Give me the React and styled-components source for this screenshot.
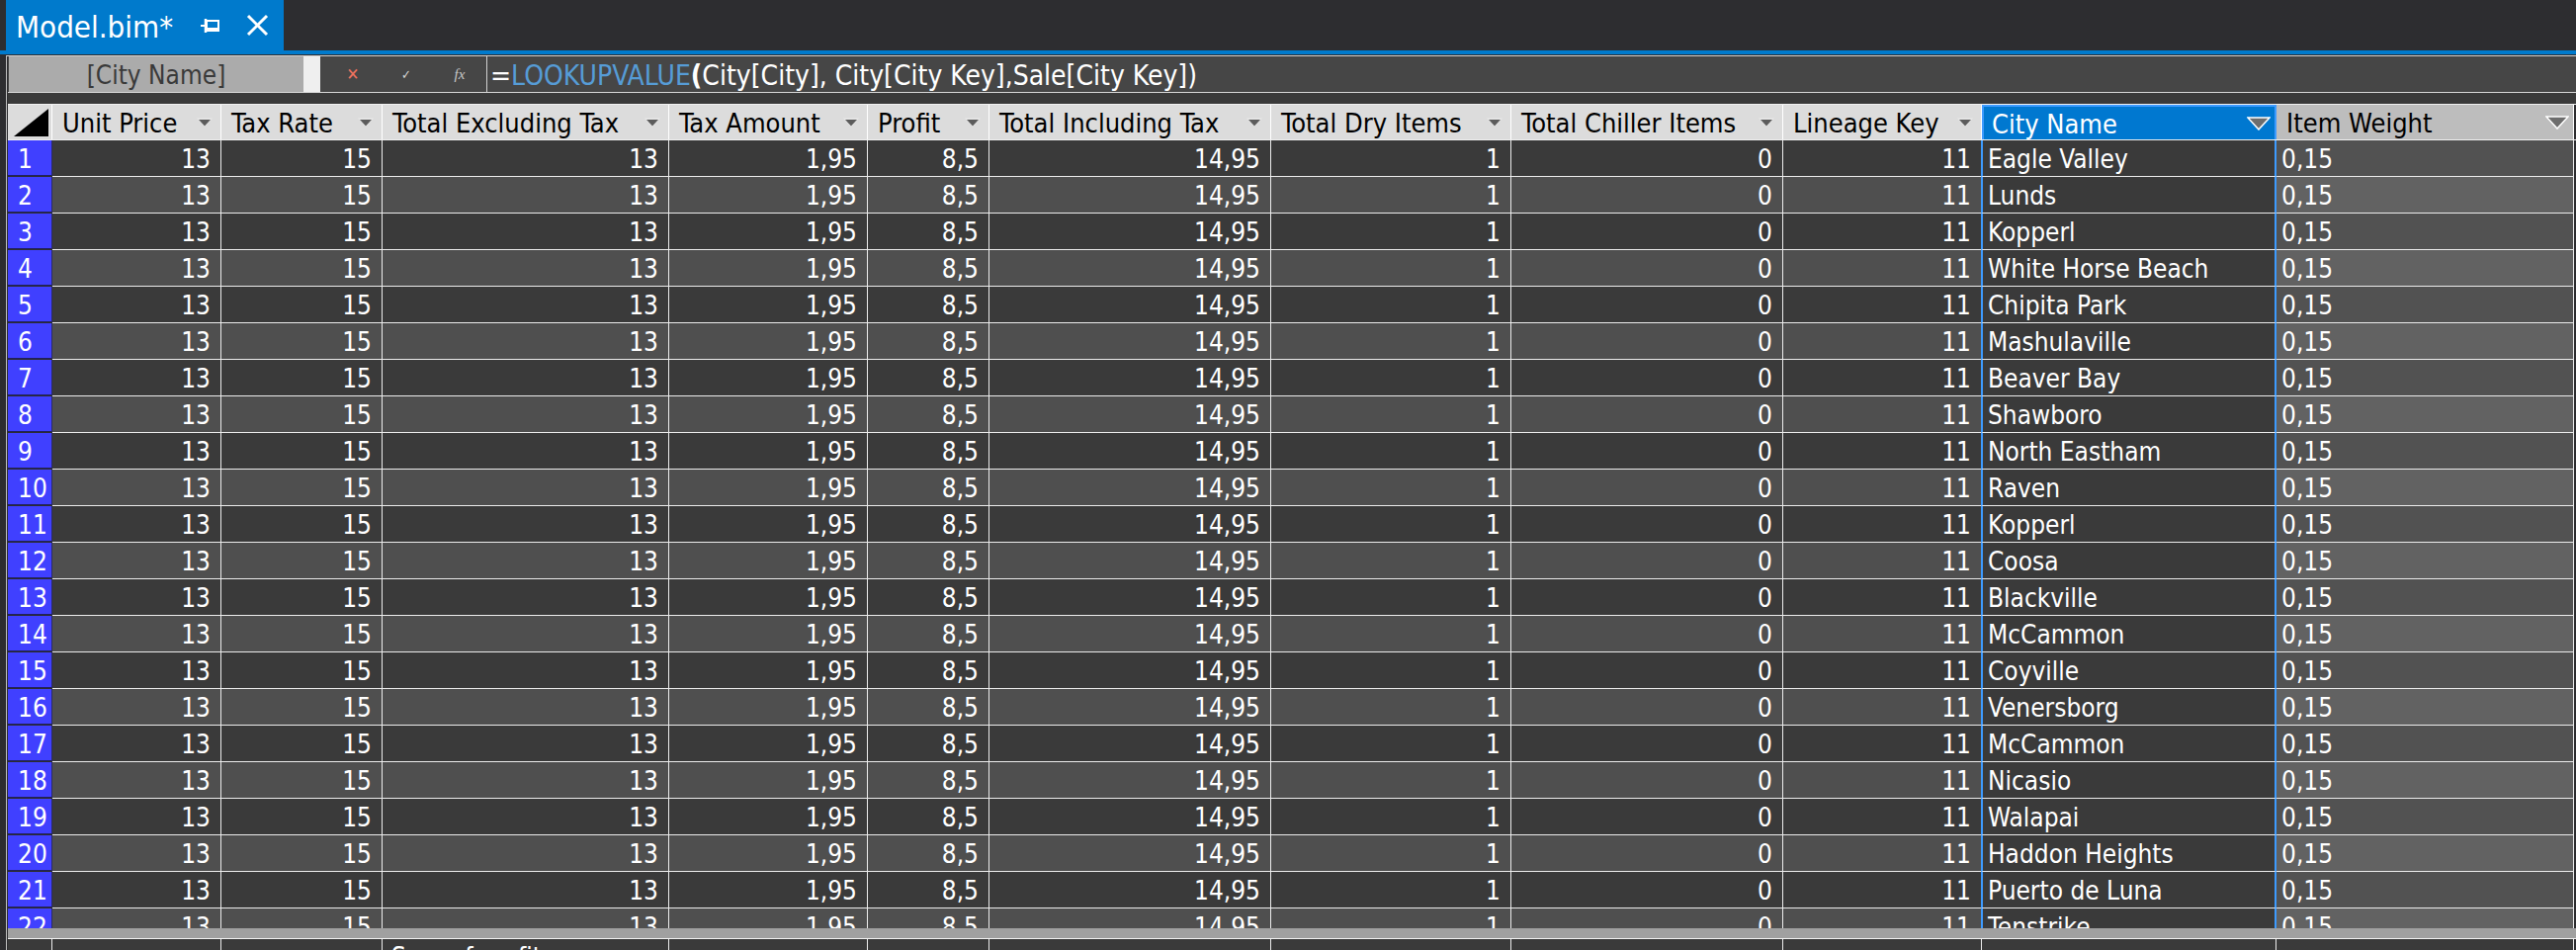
import React from 'react';
import styled, { createGlobalStyle } from 'styled-components';

// widths of grid columns, px (row header first)
const COLS = [45, 171, 163, 290, 201, 123, 285, 243, 275, 201, 298, 301];
const GRID = COLS.map((w) => `${w}px`).join(' ');

const HEADERS = [
  'Unit Price',
  'Tax Rate',
  'Total Excluding Tax',
  'Tax Amount',
  'Profit',
  'Total Including Tax',
  'Total Dry Items',
  'Total Chiller Items',
  'Lineage Key',
  'City Name',
  'Item Weight',
];

const CITIES = [
  'Eagle Valley',
  'Lunds',
  'Kopperl',
  'White Horse Beach',
  'Chipita Park',
  'Mashulaville',
  'Beaver Bay',
  'Shawboro',
  'North Eastham',
  'Raven',
  'Kopperl',
  'Coosa',
  'Blackville',
  'McCammon',
  'Coyville',
  'Venersborg',
  'McCammon',
  'Nicasio',
  'Walapai',
  'Haddon Heights',
  'Puerto de Luna',
  'Tenstrike',
];

const NUMBERS = ['13', '15', '13', '1,95', '8,5', '14,95', '1', '0', '11'];

const GlobalStyle = createGlobalStyle`
  html, body {
    margin: 0;
    padding: 0;
    background: #2d2d30;
    overflow: hidden;
  }
  body {
    font-family: "DejaVu Sans Condensed", "Liberation Sans", Arial, sans-serif;
  }
`;

const Window = styled.div`
  width: 2606px;
  height: 961px;
  display: flex;
  flex-direction: column;
  background: #2d2d30;
  overflow: hidden;
`;

// Вкладка документа
const TabStrip = styled.div`
  height: 51px;
  flex-shrink: 0;
  display: flex;
  padding-left: 6px;
`;

const Tab = styled.div`
  width: 281px;
  box-sizing: border-box;
  background: #007acc;
  display: flex;
  align-items: center;
  padding-left: 10px;
  color: #ffffff;
  font-size: 31px;
`;

const TabTitle = styled.span`
  margin-top: 2px;
`;

const TabIcon = styled.svg`
  display: block;
  margin-left: ${(p) => p.$gap}px;
`;

const BlueLine = styled.div`
  height: 4px;
  flex-shrink: 0;
  background: #007acc;
`;

const Body = styled.div`
  flex: 1;
  margin-top: 1px;
  margin-left: 6px;
  border-top: 1px solid #d2d2d2;
  border-left: 1px solid #bdbdbd;
  padding-left: 1px;
  display: flex;
  flex-direction: column;
`;

// Строка формулы
const FormulaBar = styled.div`
  height: 36px;
  flex-shrink: 0;
  display: flex;
  background: #464646;
  border-bottom: 1px solid #d6d6d6;
`;

const NameBox = styled.div`
  width: 298px;
  margin-left: 1px;
  background: #ababab;
  color: #3a3a3a;
  font-size: 26px;
  padding-top: 1px;
  box-sizing: border-box;
  display: flex;
  align-items: center;
  justify-content: center;
`;

const NameGap = styled.div`
  width: 17px;
  background: #efefef;
`;

const FormulaButtons = styled.div`
  width: 169px;
  box-sizing: border-box;
  display: flex;
  align-items: center;
  padding-left: 6px;
  border-right: 1px solid #d0d0d0;
`;

const FormulaButton = styled.span`
  width: 58px;
  text-align: center;
  color: ${(p) => p.$color};
  font-size: ${(p) => p.$size}px;
  font-family: ${(p) => (p.$serif ? '"Liberation Serif", serif' : 'inherit')};
  font-style: ${(p) => (p.$serif ? 'italic' : 'normal')};
`;

const FormulaText = styled.div`
  flex: 1;
  display: flex;
  align-items: center;
  padding: 2px 0 0 3px;
  font-size: 28px;
  color: #ffffff;
  white-space: pre;
`;

const Func = styled.span`
  color: #569cd6;
`;

const Paren = styled.span`
  font-weight: bold;
`;

const Spacer = styled.div`
  height: 11px;
  flex-shrink: 0;
  background: #3a3a3a;
`;

// Таблица
const HeaderRow = styled.div`
  display: grid;
  grid-template-columns: ${GRID};
  flex-shrink: 0;
  border-top: 1px solid #f0f0f0;
  border-bottom: 1px solid #f0f0f0;
`;

const Corner = styled.div`
  height: 35px;
  background: #dcdcdc;
  display: flex;
  align-items: center;
  padding-left: 6px;
  border-right: 1px solid #ffffff;
`;

const HeaderCell = styled.div`
  height: 35px;
  box-sizing: border-box;
  display: flex;
  align-items: center;
  justify-content: space-between;
  padding: 1px ${(p) => (p.$wide ? 4 : 8)}px 0 10px;
  font-size: 27px;
  white-space: nowrap;
  overflow: hidden;
  background: ${(p) => (p.$selected ? '#0078d0' : p.$hover ? '#bdbdbd' : '#dcdcdc')};
  color: ${(p) => (p.$selected ? '#ffffff' : '#000000')};
  border-right: 1px solid #ffffff;
  ${(p) =>
    p.$selected &&
    `
    border: 2px solid #3d9bff;
    border-bottom: 0;
    padding-left: 8px;
  `}
`;

const Rows = styled.div`
  height: 797px;
  flex-shrink: 0;
  overflow: hidden;
`;

const Row = styled.div`
  display: grid;
  grid-template-columns: ${GRID};
`;

const RowNumber = styled.div`
  height: 36px;
  box-sizing: border-box;
  padding: 2px 0 0 10px;
  background: #4040ff;
  color: #ffffff;
  font-size: 26px;
  display: flex;
  align-items: center;
  border-bottom: 1px solid #202060;
  border-right: 1px solid #2a2a70;
`;

const Cell = styled.div`
  height: 35px;
  box-sizing: content-box;
  display: flex;
  align-items: center;
  justify-content: ${(p) => (p.$text ? 'flex-start' : 'flex-end')};
  padding: ${(p) => (p.$text ? '1px 0 0 5px' : '1px 10px 0 0')};
  font-size: 26px;
  color: #ffffff;
  white-space: nowrap;
  overflow: hidden;
  background: ${(p) => p.$bg};
  border-bottom: 1px solid #ececec;
  border-right: 1px solid #ececec;
  ${(p) =>
    p.$selected &&
    `
    border-left: 2px solid #3d9bff;
    border-right: 2px solid #3d9bff;
    margin-left: -1px;
  `}
`;

const ScrollBar = styled.div`
  height: 10px;
  flex-shrink: 0;
  background: #a0a0a0;
  border-bottom: 1px solid #f2f2f2;
`;

const MeasureRow = styled.div`
  display: grid;
  grid-template-columns: ${GRID};
`;

const MeasureCell = styled.div`
  height: 36px;
  background: #3a3a3a;
  border-right: 1px solid #ececec;
  color: #ffffff;
  font-size: 26px;
  padding: 3px 0 0 9px;
  white-space: nowrap;
  overflow: hidden;
`;

const DropArrow = ({ big }) =>
  big ? (
    <svg width="24" height="14" viewBox="0 0 24 14">
      <polygon points="1,1 23,1 12,13" fill="#6d6d6d" stroke="#ffffff" strokeWidth="1.5" />
    </svg>
  ) : (
    <svg width="16" height="10" viewBox="0 0 16 10">
      <polygon points="0,0.5 16,0.5 8,9.5" fill="#e8e8e8" />
      <polygon points="2,2 14,2 8,8.5" fill="#5c5c5c" />
    </svg>
  );

const rowBg = (i, col) => {
  const even = i % 2 === 1;
  if (col === 9) return '#3a3a3a';
  if (col === 10) return even ? '#626262' : '#525252';
  return even ? '#4f4f4f' : '#3a3a3a';
};

const App = () => {
  return (
    <Window>
      <GlobalStyle />
      <TabStrip>
        <Tab>
          <TabTitle>Model.bim*</TabTitle>
          <TabIcon $gap={28} width="20" height="18" viewBox="0 0 20 18">
            <line x1="0" y1="9" x2="5" y2="9" stroke="#fff" strokeWidth="2" />
            <line x1="5" y1="2" x2="5" y2="16" stroke="#fff" strokeWidth="2.5" />
            <rect x="6" y="4" width="12" height="10" fill="none" stroke="#fff" strokeWidth="2" />
            <line x1="6" y1="12" x2="18" y2="12" stroke="#fff" strokeWidth="2" />
          </TabIcon>
          <TabIcon $gap={26} width="23" height="23" viewBox="0 0 23 23">
            <line x1="2" y1="2" x2="21" y2="21" stroke="#fff" strokeWidth="3" />
            <line x1="21" y1="2" x2="2" y2="21" stroke="#fff" strokeWidth="3" />
          </TabIcon>
        </Tab>
      </TabStrip>
      <BlueLine />
      <Body>
        <FormulaBar>
          <NameBox>[City Name]</NameBox>
          <NameGap />
          <FormulaButtons>
            <FormulaButton $color="#f0735f" $size={17}>✕</FormulaButton>
            <FormulaButton $color="#d8d8d8" $size={13}>✓</FormulaButton>
            <FormulaButton $color="#c8c8c8" $size={15} $serif>
              fx
            </FormulaButton>
          </FormulaButtons>
          <FormulaText>
            =<Func>LOOKUPVALUE</Func>
            <Paren>(</Paren>City[City], City[City Key],Sale[City Key])
          </FormulaText>
        </FormulaBar>
        <Spacer />
        <HeaderRow>
          <Corner>
            <svg width="35" height="28" viewBox="0 0 35 28">
              <polygon points="0,28 35,0 35,28" fill="#000" />
            </svg>
          </Corner>
          {HEADERS.map((h, c) => (
            <HeaderCell key={h} $selected={c === 9} $hover={c === 10} $wide={c >= 9}>
              <span>{h}</span>
              <DropArrow big={c >= 9} />
            </HeaderCell>
          ))}
        </HeaderRow>
        <Rows>
          {CITIES.map((city, i) => (
            <Row key={i}>
              <RowNumber>{i + 1}</RowNumber>
              {NUMBERS.map((n, c) => (
                <Cell key={c} $bg={rowBg(i, c)}>
                  {n}
                </Cell>
              ))}
              <Cell $text $selected $bg={rowBg(i, 9)}>
                {city}
              </Cell>
              <Cell $text $bg={rowBg(i, 10)}>
                0,15
              </Cell>
            </Row>
          ))}
        </Rows>
        <ScrollBar />
        <MeasureRow>
          {COLS.map((w, c) => (
            <MeasureCell key={c}>{c === 3 ? 'Sum of profit:' : ''}</MeasureCell>
          ))}
        </MeasureRow>
      </Body>
    </Window>
  );
};

export default App;
